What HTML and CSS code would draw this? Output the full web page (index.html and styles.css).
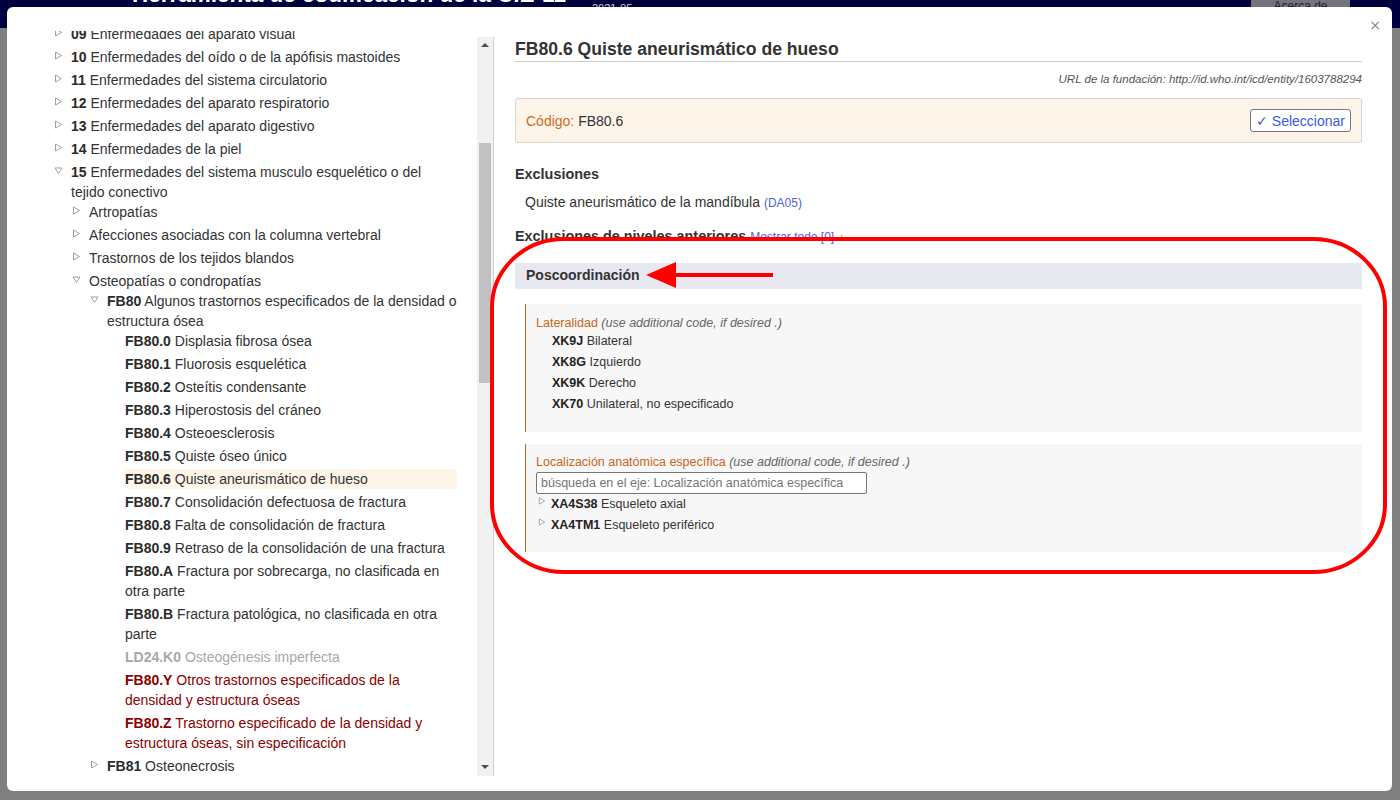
FILE: index.html
```html
<!DOCTYPE html>
<html lang="es">
<head>
<meta charset="utf-8">
<title>Herramienta de codificación de la CIE-11</title>
<link rel="stylesheet" href="styles.css">
</head>
<body>
<header class="topbar">
  <span class="app-title">Herramienta de codificación de la CIE-11</span>
  <span class="version">2021-05</span>
  <span class="about">Acerca de</span>
</header>

<div class="modal">
  <button class="close" type="button">×</button>
  <div class="modal-body">
    <div class="tree-pane">
      <div class="tree-scroll">
        <ul class="tree">
          <li><span class="label"><svg class="toggle" viewBox="0 0 9 9"><polygon points="1.5,1 7.5,4.5 1.5,8"/></svg><b>09</b> Enfermedades del aparato visual</span></li>
          <li><span class="label"><svg class="toggle" viewBox="0 0 9 9"><polygon points="1.5,1 7.5,4.5 1.5,8"/></svg><b>10</b> Enfermedades del oído o de la apófisis mastoides</span></li>
          <li><span class="label"><svg class="toggle" viewBox="0 0 9 9"><polygon points="1.5,1 7.5,4.5 1.5,8"/></svg><b>11</b> Enfermedades del sistema circulatorio</span></li>
          <li><span class="label"><svg class="toggle" viewBox="0 0 9 9"><polygon points="1.5,1 7.5,4.5 1.5,8"/></svg><b>12</b> Enfermedades del aparato respiratorio</span></li>
          <li><span class="label"><svg class="toggle" viewBox="0 0 9 9"><polygon points="1.5,1 7.5,4.5 1.5,8"/></svg><b>13</b> Enfermedades del aparato digestivo</span></li>
          <li><span class="label"><svg class="toggle" viewBox="0 0 9 9"><polygon points="1.5,1 7.5,4.5 1.5,8"/></svg><b>14</b> Enfermedades de la piel</span></li>
          <li>
            <span class="label"><svg class="toggle" viewBox="0 0 9 9"><polygon points="1,2 8,2 4.5,7.5"/></svg><b>15</b> Enfermedades del sistema musculo esquelético o del tejido conectivo</span>
            <ul>
              <li><span class="label"><svg class="toggle" viewBox="0 0 9 9"><polygon points="1.5,1 7.5,4.5 1.5,8"/></svg>Artropatías</span></li>
              <li><span class="label"><svg class="toggle" viewBox="0 0 9 9"><polygon points="1.5,1 7.5,4.5 1.5,8"/></svg>Afecciones asociadas con la columna vertebral</span></li>
              <li><span class="label"><svg class="toggle" viewBox="0 0 9 9"><polygon points="1.5,1 7.5,4.5 1.5,8"/></svg>Trastornos de los tejidos blandos</span></li>
              <li>
                <span class="label"><svg class="toggle" viewBox="0 0 9 9"><polygon points="1,2 8,2 4.5,7.5"/></svg>Osteopatías o condropatías</span>
                <ul>
                  <li>
                    <span class="label"><svg class="toggle" viewBox="0 0 9 9"><polygon points="1,2 8,2 4.5,7.5"/></svg><b>FB80</b> Algunos trastornos especificados de la densidad o estructura ósea</span>
                    <ul>
                      <li><span class="label"><b>FB80.0</b> Displasia fibrosa ósea</span></li>
                      <li><span class="label"><b>FB80.1</b> Fluorosis esquelética</span></li>
                      <li><span class="label"><b>FB80.2</b> Osteítis condensante</span></li>
                      <li><span class="label"><b>FB80.3</b> Hiperostosis del cráneo</span></li>
                      <li><span class="label"><b>FB80.4</b> Osteoesclerosis</span></li>
                      <li><span class="label"><b>FB80.5</b> Quiste óseo único</span></li>
                      <li><span class="label selected"><b>FB80.6</b> Quiste aneurismático de hueso</span></li>
                      <li><span class="label"><b>FB80.7</b> Consolidación defectuosa de fractura</span></li>
                      <li><span class="label"><b>FB80.8</b> Falta de consolidación de fractura</span></li>
                      <li><span class="label"><b>FB80.9</b> Retraso de la consolidación de una fractura</span></li>
                      <li><span class="label"><b>FB80.A</b> Fractura por sobrecarga, no clasificada en otra parte</span></li>
                      <li><span class="label"><b>FB80.B</b> Fractura patológica, no clasificada en otra parte</span></li>
                      <li><span class="label linked"><b>LD24.K0</b> Osteogénesis imperfecta</span></li>
                      <li><span class="label residual"><b>FB80.Y</b> Otros trastornos especificados de la densidad y estructura óseas</span></li>
                      <li><span class="label residual"><b>FB80.Z</b> Trastorno especificado de la densidad y estructura óseas, sin especificación</span></li>
                    </ul>
                  </li>
                  <li><span class="label"><svg class="toggle" viewBox="0 0 9 9"><polygon points="1.5,1 7.5,4.5 1.5,8"/></svg><b>FB81</b> Osteonecrosis</span></li>
                </ul>
              </li>
            </ul>
          </li>
        </ul>
      </div>
      <div class="scrollbar">
        <span class="sb-arrow sb-up"></span>
        <div class="sb-track"><div class="sb-thumb"></div></div>
        <span class="sb-arrow sb-down"></span>
      </div>
    </div>

    <div class="detail">
      <h2 class="entity-title">FB80.6 Quiste aneurismático de hueso</h2>
      <div class="foundation-url">URL de la fundación: http://id.who.int/icd/entity/1603788294</div>
      <div class="code-box">
        <span class="code-text"><span class="code-label">Código:</span> FB80.6</span>
        <button class="select-btn" type="button">✓ Seleccionar</button>
      </div>

      <h3 class="section-title">Exclusiones</h3>
      <div class="exclusion">Quiste aneurismático de la mandíbula <span class="code-link">(DA05)</span></div>

      <h3 class="section-title upper">Exclusiones de niveles anteriores <span class="show-all">Mostrar todo [0]</span> <span class="show-sign">+</span></h3>

      <div class="pc-header">Poscoordinación</div>

      <div class="axis">
        <div class="axis-title"><span class="axis-name">Lateralidad</span> <i>(use additional code, if desired .)</i></div>
        <ul class="axis-list">
          <li><b>XK9J</b> Bilateral</li>
          <li><b>XK8G</b> Izquierdo</li>
          <li><b>XK9K</b> Derecho</li>
          <li><b>XK70</b> Unilateral, no especificado</li>
        </ul>
      </div>

      <div class="axis axis-loc">
        <div class="axis-title"><span class="axis-name">Localización anatómica específica</span> <i>(use additional code, if desired .)</i></div>
        <input class="axis-search" type="text" placeholder="búsqueda en el eje: Localización anatómica específica">
        <ul class="axis-list">
          <li><svg class="toggle" viewBox="0 0 9 9"><polygon points="1.5,1 7.5,4.5 1.5,8"/></svg><b>XA4S38</b> Esqueleto axial</li>
          <li><svg class="toggle" viewBox="0 0 9 9"><polygon points="1.5,1 7.5,4.5 1.5,8"/></svg><b>XA4TM1</b> Esqueleto periférico</li>
        </ul>
      </div>
    </div>
  </div>
</div>

<svg class="annotation" width="1400" height="800" viewBox="0 0 1400 800">
  <rect x="492" y="239" width="893" height="333" rx="72" ry="68" fill="none" stroke="#ff0000" stroke-width="4"/>
  <line x1="670" y1="275" x2="773" y2="275" stroke="#ff0000" stroke-width="4"/>
  <polygon points="646,275 676,262 676,288" fill="#ff0000"/>
</svg>
</body>
</html>
```

FILE: styles.css
```css
* { box-sizing: border-box; }

html, body {
  margin: 0;
  height: 100%;
}

body {
  background: #808080;
  font-family: "Liberation Sans", Arial, sans-serif;
  color: #333;
  overflow: hidden;
}

/* page header behind the dialog */
.topbar {
  height: 28px;
  background: #00003f;
  display: flex;
  align-items: flex-start;
  padding-left: 132px;
  overflow: hidden;
}

.app-title {
  color: #fff;
  font-weight: bold;
  font-size: 22.5px;
  line-height: 24px;
  margin-top: -17px;
  white-space: nowrap;
}

.version {
  color: #c8c8d8;
  font-size: 11px;
  line-height: 12px;
  margin-left: 26px;
  margin-top: 2px;
}

.about {
  margin-left: auto;
  margin-right: 50px;
  width: 99px;
  height: 20px;
  background: #74747c;
  color: #222;
  font-size: 12px;
  text-align: center;
  line-height: 12px;
}

/* dialog */
.modal {
  position: fixed;
  left: 7px;
  top: 7px;
  right: 8px;
  bottom: 9px;
  background: #fff;
  border-radius: 6px;
}

.close {
  position: absolute;
  top: 10px;
  right: 11px;
  border: 0;
  background: none;
  color: #888;
  font-family: "DejaVu Sans", sans-serif;
  font-size: 14px;
  padding: 0;
  line-height: 16px;
}

.modal-body {
  display: flex;
  height: 100%;
  padding-top: 23px;
  padding-right: 30px;
}

/* tree pane */
.tree-pane {
  display: flex;
  flex: 0 0 487px;
}

.tree-scroll {
  width: 470px;
  height: 745px;
  margin-top: 1px;
  overflow: hidden;
  padding-right: 20px;
}

.tree,
.tree ul {
  list-style: none;
  margin: 0;
  padding: 0;
}

.tree {
  padding-left: 64px;
  margin-top: -7px;
}

.tree ul {
  padding-left: 18px;
}

.tree li {
  font-size: 14px;
  line-height: 20px;
}

.tree li + li {
  margin-top: 3px;
}

.label {
  display: block;
  color: #333;
}

.label b {
  color: #2b2b2b;
}

.label.selected {
  background: #fdf5e8;
}

.label.linked,
.label.linked b {
  color: #a8a8a8;
}

.label.residual,
.label.residual b {
  color: #8b0000;
}

.toggle {
  width: 9px;
  height: 9px;
  margin-left: -17px;
  margin-right: 8px;
  vertical-align: 2px;
  fill: #fff;
  stroke: #959595;
  stroke-width: 0.9;
}

/* fake scrollbar */
.scrollbar {
  width: 17px;
  height: 739px;
  margin-top: 7px;
  background: #f1f1f1;
  border-right: 1px solid #cfcfcf;
  display: flex;
  flex-direction: column;
  align-items: center;
}

.sb-arrow {
  width: 0;
  height: 0;
  display: flex;
}

.sb-up {
  margin-top: 6px;
  flex: 0 0 4px;
  border-left: 4px solid transparent;
  border-right: 4px solid transparent;
  border-bottom: 4px solid #505050;
}

.sb-down {
  margin-bottom: 7px;
  flex: 0 0 4px;
  border-left: 4px solid transparent;
  border-right: 4px solid transparent;
  border-top: 4px solid #505050;
}

.sb-track {
  flex: 1;
  width: 100%;
  padding: 0 2px;
}

.sb-thumb {
  margin-top: 96px;
  height: 240px;
  background: #c1c1c1;
}

/* detail pane */
.detail {
  margin-left: 21px;
  flex: 1;
  padding-top: 7px;
}

.entity-title {
  margin: 0;
  font-size: 17.6px;
  line-height: 24px;
  font-weight: bold;
  color: #333;
  border-bottom: 1px solid #cccccc;
}

.foundation-url {
  margin-top: 10px;
  text-align: right;
  font-size: 11.5px;
  line-height: 14px;
  font-style: italic;
  color: #555;
}

.code-box {
  margin-top: 12px;
  height: 45px;
  background: #fdf5e9;
  border: 1px solid #d9d4cc;
  border-radius: 3px;
  display: flex;
  align-items: center;
  justify-content: space-between;
  padding: 0 10px;
  font-size: 14px;
}

.code-label {
  color: #d2691e;
}

.select-btn {
  height: 23px;
  padding: 0 5px;
  background: #fff;
  border: 1px solid #777;
  border-radius: 3px;
  color: #3b5ce0;
  font-family: "Liberation Sans", Arial, sans-serif;
  font-size: 14px;
  line-height: 20px;
}

.section-title {
  margin: 21px 0 0;
  font-size: 14.4px;
  line-height: 20px;
  font-weight: bold;
  color: #333;
}

.section-title.upper {
  margin-top: 14px;
}

.exclusion {
  margin-top: 8px;
  padding-left: 10px;
  font-size: 14px;
  line-height: 20px;
}

.code-link,
.show-all {
  color: #5060e0;
  font-size: 12px;
  font-weight: normal;
  line-height: 1;
}

.show-sign {
  color: #999;
  font-size: 11px;
  font-weight: normal;
  line-height: 1;
}

.pc-header {
  margin-top: 17px;
  height: 26px;
  line-height: 24px;
  background: #e8e8f1;
  padding-left: 11px;
  font-size: 14px;
  font-weight: bold;
  color: #333;
}

.axis {
  margin: 15px 0 0 10px;
  background: #f7f7f7;
  border-left: 1px solid #b8651f;
  padding: 12px 10px 17px;
  font-size: 12.5px;
}

.axis-loc {
  margin-top: 12px;
  padding-top: 11px;
  padding-bottom: 16px;
}

.axis-title {
  line-height: 15px;
  color: #777;
}

.axis-name {
  color: #c8661a;
}

.axis-title i {
  color: #666;
}

.axis-list {
  list-style: none;
  margin: 0;
  padding: 0 0 0 16px;
}

.axis-list li {
  line-height: 21px;
  color: #333;
}

.axis-list b {
  color: #222;
}

.axis-list .toggle {
  margin-left: -14px;
  margin-right: 5px;
  width: 8px;
  height: 8px;
  vertical-align: 3px;
}

.axis-search {
  display: block;
  margin-top: 2px;
  width: 331px;
  height: 22px;
  border: 1px solid #767676;
  border-radius: 2px;
  padding: 0 4px;
  font-family: "Liberation Sans", Arial, sans-serif;
  font-size: 12.5px;
  color: #333;
  background: #fff;
}

.axis-search::placeholder {
  color: #757575;
}

/* red annotation drawn over the screenshot */
.annotation {
  position: absolute;
  left: 0;
  top: 0;
  pointer-events: none;
}
```
